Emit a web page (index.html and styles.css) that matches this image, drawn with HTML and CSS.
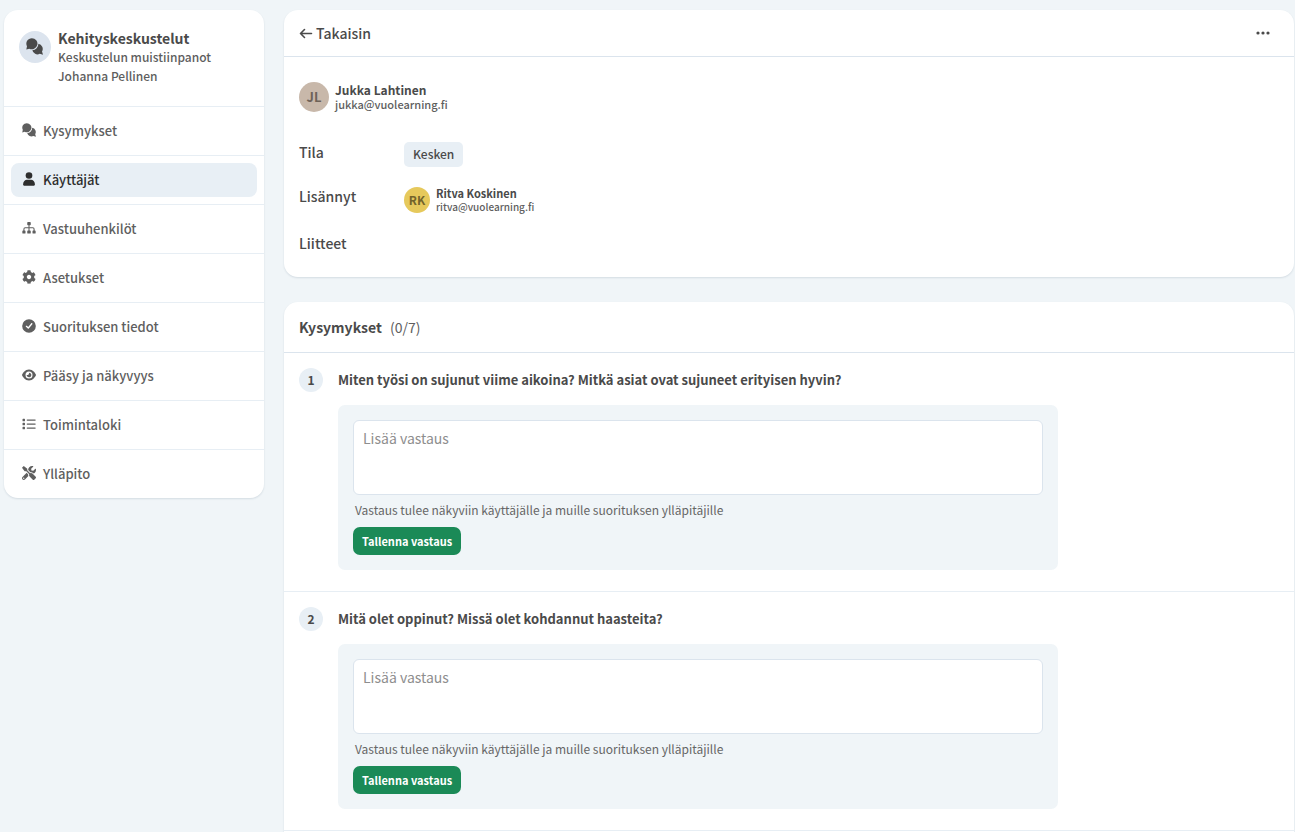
FILE: index.html
```html
<!DOCTYPE html>
<html lang="fi">
<head>
<meta charset="utf-8">
<meta name="viewport" content="width=device-width, initial-scale=1">
<title>Kehityskeskustelut</title>
<link rel="stylesheet" href="styles.css">
</head>
<body>
<svg class="sprite" aria-hidden="true">
  <symbol id="comments" viewBox="0 0 52 51"><path d="M18 0A17 17 0 1 1 10 32L1 35L3 25A17 17 0 0 1 18 0z"/><path d="M38 17.200A16 16 0 0 1 49 41L52 51L42 48A16 16 0 0 1 19.400 37A20 20 0 0 0 38 17.200z"/></symbol>
  <symbol id="user" viewBox="0 0 40 40"><circle cx="20" cy="10" r="9.500"/><path d="M3 36C3 27 9 22 14 22H26C31 22 37 27 37 36Q37 39 34 39H6Q3 39 3 36z"/></symbol>
  <symbol id="sitemap" viewBox="0 0 40 40"><path d="M17 3h6q2 0 2 2v5q0 2-2 2h-1.500v6H31q5 0 5 5v4h1q2 0 2 2v5q0 2-2 2h-5q-2 0-2-2v-5q0-2 2-2h1v-4q0-2-2-2h-9.500v6H23q2 0 2 2v5q0 2-2 2h-6q-2 0-2-2v-5q0-2 2-2h1.500v-6H9q-2 0-2 2v4h1q2 0 2 2v5q0 2-2 2H3q-2 0-2-2v-5q0-2 2-2h1v-4q0-5 5-5h9.500v-6H17q-2 0-2-2V5q0-2 2-2z"/></symbol>
  <symbol id="cog" viewBox="0 0 512 512"><path d="M487.400 315.700l-42.600-24.600c4.300-23.200 4.300-47 0-70.200l42.600-24.600c4.900-2.800 7.100-8.600 5.500-14-11.100-35.600-30-67.800-54.700-94.600-3.800-4.100-10-5.100-14.800-2.300L380.800 110c-17.900-15.400-38.500-27.300-60.800-35.100V25.800c0-5.600-3.900-10.500-9.400-11.700-36.700-8.200-74.300-7.800-109.200 0-5.500 1.200-9.400 6.100-9.400 11.700V75c-22.200 7.900-42.800 19.800-60.800 35.100L88.700 85.500c-4.900-2.800-11-1.900-14.800 2.300-24.700 26.700-43.600 58.900-54.700 94.600-1.700 5.400.6 11.200 5.500 14L67.300 221c-4.300 23.200-4.300 47 0 70.200l-42.600 24.600c-4.900 2.800-7.100 8.600-5.500 14 11.100 35.600 30 67.800 54.700 94.600 3.800 4.100 10 5.100 14.800 2.300l42.600-24.600c17.900 15.400 38.500 27.300 60.800 35.100v49.200c0 5.600 3.900 10.500 9.400 11.700 36.700 8.200 74.300 7.800 109.200 0 5.500-1.200 9.400-6.100 9.400-11.700v-49.200c22.200-7.900 42.800-19.800 60.800-35.100l42.600 24.600c4.900 2.800 11 1.900 14.800-2.300 24.700-26.700 43.600-58.900 54.700-94.600 1.500-5.500-.7-11.300-5.600-14.100zM256 336c-44.100 0-80-35.900-80-80s35.900-80 80-80 80 35.900 80 80-35.900 80-80 80z"/></symbol>
  <symbol id="check" viewBox="0 0 512 512"><path d="M256 506A250 250 0 1 0 256 6a250 250 0 1 0 0 500zM377 190L248 348c-9.400 11-24.600 11-35 2l-70-66c-10-9.400-10-24.600 0-34s24.600-9.400 34 0l50 46L339 158c9-11 25-12 35-3s12 25 3 35z"/></symbol>
  <symbol id="eye" viewBox="0 0 576 512"><path d="M288 32c-80.800 0-145.500 36.800-192.600 80.600C48.600 156 17.300 208 2.500 243.700c-3.300 7.900-3.300 16.700 0 24.600C17.300 304 48.600 356 95.400 399.400C142.500 443.200 207.200 480 288 480s145.500-36.800 192.600-80.600c46.800-43.500 78.100-95.400 93-131.100c3.300-7.900 3.300-16.700 0-24.600c-14.900-35.700-46.200-87.700-93-131.100C433.500 68.800 368.800 32 288 32zM144 256a144 144 0 1 1 288 0 144 144 0 1 1 -288 0zm144-64c0 35.300-28.700 64-64 64c-7.100 0-13.900-1.200-20.300-3.300c-5.500-1.800-11.900 1.600-11.700 7.400c.3 6.900 1.300 13.800 3.200 20.700c13.700 51.200 66.400 81.600 117.600 67.900s81.600-66.400 67.900-117.600c-11.100-41.500-47.800-69.400-88.600-71.100c-5.800-.2-9.200 6.100-7.400 11.700c2.100 6.400 3.300 13.200 3.300 20.300z"/></symbol>
  <symbol id="list" viewBox="0 0 40 40"><path d="M3 5h4q1.500 0 1.500 1.500v4Q8.500 12 7 12H3q-1.500 0-1.500-1.500v-4Q1.500 5 3 5zM3 16.500h4q1.500 0 1.500 1.500v4q0 1.500-1.500 1.500H3Q1.500 23.500 1.500 22v-4q0-1.500 1.500-1.500zM3 28h4q1.500 0 1.500 1.500v4Q8.500 35 7 35H3q-1.500 0-1.500-1.500v-4Q1.500 28 3 28zM15 7h22.500a1.500 1.500 0 0 1 0 3.500H15A1.500 1.500 0 0 1 15 7zM15 18.500h22.500a1.500 1.500 0 0 1 0 3.500H15a1.500 1.500 0 0 1 0-3.500zM15 30h22.500a1.500 1.500 0 0 1 0 3.500H15A1.500 1.500 0 0 1 15 30z"/></symbol>
  <symbol id="tools" viewBox="0 0 512 512"><path d="M501.100 395.700L384 278.600c-23.100-23.100-57.600-27.600-85.400-13.900L192 158.100V96L64 0 0 64l96 128h62.100l106.600 106.600c-13.600 27.800-9.200 62.300 13.900 85.400l117.100 117.100c14.600 14.600 38.200 14.600 52.700 0l52.700-52.700c14.500-14.600 14.500-38.200 0-52.700zM331.700 225c28.300 0 54.900 11 74.900 31l19.400 19.400c15.800-6.900 30.800-16.500 43.800-29.500 37.100-37.100 49.700-89.300 37.900-136.700-2.200-9-13.500-12.100-20.100-5.500l-74.400 74.400-67.900-11.300L334 98.900l74.400-74.400c6.600-6.600 3.400-17.900-5.700-20.200-47.400-11.700-99.600.9-136.600 37.900-28.500 28.500-41.900 66.100-41.200 103.600l82.100 82.100c8.100-1.900 16.500-2.900 24.700-2.900zm-103.900 82l-56.700-56.700L18.700 402.800c-25 25-25 65.500 0 90.500s65.500 25 90.500 0l123.600-123.600c-7.600-19.900-9.900-41.600-5-62.700zM64 472c-13.200 0-24-10.800-24-24 0-13.300 10.700-24 24-24s24 10.700 24 24c0 13.200-10.700 24-24 24z"/></symbol>
</svg>
<div class="layout">
  <aside class="card sidebar">
    <header class="profile">
      <span class="profile-icon"><svg class="icon-large" aria-hidden="true"><use href="#comments"/></svg></span>
      <div>
        <h1 class="profile-title">Kehityskeskustelut</h1>
        <p class="profile-line">Keskustelun muistiinpanot</p>
        <p class="profile-line">Johanna Pellinen</p>
      </div>
    </header>
    <nav class="menu">
      <div class="menu-row"><a class="menu-link" href="#"><svg class="icon" aria-hidden="true"><use href="#comments"/></svg>Kysymykset</a></div>
      <div class="menu-row"><a class="menu-link active" href="#" aria-current="page"><svg class="icon" aria-hidden="true"><use href="#user"/></svg>Käyttäjät</a></div>
      <div class="menu-row"><a class="menu-link" href="#"><svg class="icon" aria-hidden="true"><use href="#sitemap"/></svg>Vastuuhenkilöt</a></div>
      <div class="menu-row"><a class="menu-link" href="#"><svg class="icon" aria-hidden="true"><use href="#cog"/></svg>Asetukset</a></div>
      <div class="menu-row"><a class="menu-link" href="#"><svg class="icon" aria-hidden="true"><use href="#check"/></svg>Suorituksen tiedot</a></div>
      <div class="menu-row"><a class="menu-link" href="#"><svg class="icon" aria-hidden="true"><use href="#eye"/></svg>Pääsy ja näkyvyys</a></div>
      <div class="menu-row"><a class="menu-link" href="#"><svg class="icon" aria-hidden="true"><use href="#list"/></svg>Toimintaloki</a></div>
      <div class="menu-row"><a class="menu-link" href="#"><svg class="icon" aria-hidden="true"><use href="#tools"/></svg>Ylläpito</a></div>
    </nav>
  </aside>
  <main class="content">
    <section class="card">
      <header class="toolbar">
        <a class="back" href="#"><svg class="arrow" viewBox="0 0 14 14" aria-hidden="true"><path d="M5.500 3.500L1.500 7.500l4 4M1.500 7.500h11"/></svg>Takaisin</a>
        <button class="more" type="button" aria-label="Lisää toimintoja"><svg class="dots" viewBox="0 0 14 4" aria-hidden="true"><circle cx="2" cy="2" r="1.600"/><circle cx="7" cy="2" r="1.600"/><circle cx="12" cy="2" r="1.600"/></svg></button>
      </header>
      <div class="details">
        <div class="person">
          <span class="avatar avatar-beige">JL</span>
          <div><p class="person-name">Jukka Lahtinen</p><p class="person-mail">jukka@vuolearning.fi</p></div>
        </div>
        <dl class="facts">
          <dt>Tila</dt><dd><span class="status">Kesken</span></dd>
          <dt>Lisännyt</dt>
          <dd class="person person-small">
            <span class="avatar avatar-yellow">RK</span>
            <div><p class="person-name">Ritva Koskinen</p><p class="person-mail">ritva@vuolearning.fi</p></div>
          </dd>
          <dt>Liitteet</dt><dd></dd>
        </dl>
      </div>
    </section>
    <section class="card questions">
      <header class="questions-head"><h2 class="questions-title">Kysymykset</h2><span class="count">(0/7)</span></header>
      <article class="question">
        <span class="number">1</span>
        <form class="question-body">
          <label class="question-text" for="a1">Miten työsi on sujunut viime aikoina? Mitkä asiat ovat sujuneet erityisen hyvin?</label>
          <div class="answer">
            <textarea class="answer-input" id="a1" placeholder="Lisää vastaus"></textarea>
            <p class="hint">Vastaus tulee näkyviin käyttäjälle ja muille suorituksen ylläpitäjille</p>
            <button class="save" type="button">Tallenna vastaus</button>
          </div>
        </form>
      </article>
      <article class="question">
        <span class="number">2</span>
        <form class="question-body">
          <label class="question-text" for="a2">Mitä olet oppinut? Missä olet kohdannut haasteita?</label>
          <div class="answer">
            <textarea class="answer-input" id="a2" placeholder="Lisää vastaus"></textarea>
            <p class="hint">Vastaus tulee näkyviin käyttäjälle ja muille suorituksen ylläpitäjille</p>
            <button class="save" type="button">Tallenna vastaus</button>
          </div>
        </form>
      </article>
    </section>
  </main>
</div>
</body>
</html>
```
FILE: styles.css
```css
* { box-sizing: border-box; }

body {
  margin: 0;
  background: #f0f5f8;
  color: #4a4a4a;
  font-family: "Noto Sans CJK SC", "Noto Sans", sans-serif;
  font-size: 14px;
  line-height: 20px;
}

h1, h2, p, dl, dd { margin: 0; }
a { color: inherit; text-decoration: none; }
button, textarea { font: inherit; }
.sprite { display: none; }

.layout {
  display: grid;
  grid-template-columns: 260px minmax(0, 1fr);
  gap: 20px;
  align-items: start;
  padding: 10px 1px 0 4px;
}

.card {
  background: #fff;
  border-radius: 14px;
  box-shadow: 0 1px 2px rgba(40, 70, 100, 0.14);
}

.profile {
  display: flex;
  gap: 7px;
  padding: 19px 15px 21px;
}

.profile-icon {
  display: flex;
  flex: none;
  align-items: center;
  justify-content: center;
  width: 32px;
  height: 32px;
  margin-top: 2px;
  border-radius: 50%;
  background: #dce4ee;
}

.icon-large { width: 17px; height: 17px; margin: 0 1px 1px 0; fill: #4a4a4a; }
.profile-title { font-size: 14px; font-weight: 700; line-height: 18px; }
.profile-line { color: #5e5e5e; font-size: 12px; font-weight: 500; line-height: 19px; }

.menu-row { padding: 7px; border-top: 1px solid #e7eef4; }

.menu-link {
  display: flex;
  align-items: flex-start;
  gap: 7px;
  padding: 7px 11px;
  border-radius: 8px;
  color: #5f5f5f;
  font-size: 13px;
  font-weight: 500;
}

.menu-link.active { background: #e8eff5; color: #2e2e2e; }
.icon { flex: none; width: 14px; height: 14px; margin-top: 2px; fill: currentColor; }

.content { display: grid; gap: 25px; }

.toolbar {
  display: flex;
  align-items: center;
  justify-content: space-between;
  padding: 13px 24px 13px 15px;
  border-bottom: 1px solid #dbe4ed;
}

.back { display: flex; align-items: center; gap: 3px; font-weight: 500; }
.arrow { width: 14px; height: 14px; fill: none; stroke: #4a4a4a; stroke-width: 1.6; stroke-linecap: round; stroke-linejoin: round; }
.more { display: flex; padding: 0; border: 0; background: none; }
.dots { width: 14px; height: 4px; fill: #4a4a4a; }

.details { padding: 25px 15px 24px; }
.person { display: flex; align-items: center; gap: 6px; }

.avatar {
  display: flex;
  flex: none;
  align-items: center;
  justify-content: center;
  width: 30px;
  height: 30px;
  border-radius: 50%;
  font-size: 13px;
  font-weight: 700;
}

.avatar-beige { background: #c8b8aa; color: #6e6258; }
.avatar-yellow { background: #e6c95c; color: #73642b; }
.person-name { font-size: 12px; font-weight: 700; line-height: 15px; }
.person-mail { color: #5e5e5e; font-size: 11px; font-weight: 500; line-height: 15px; }
.person-small .avatar { width: 26px; height: 26px; font-size: 12px; }
.person-small .person-name { font-size: 11px; line-height: 14px; }
.person-small .person-mail { font-size: 10px; line-height: 14px; }

.facts {
  display: grid;
  grid-template-columns: 105px minmax(0, 1fr);
  row-gap: 19px;
  align-items: start;
  margin-top: 30px;
  font-weight: 500;
}

.status {
  display: inline-block;
  padding: 2px 9px 3px;
  border-radius: 5px;
  background: #e8eff5;
  font-size: 12px;
}

.questions { padding-bottom: 20px; }

.questions-head {
  display: flex;
  align-items: center;
  gap: 8px;
  padding: 15px;
  border-bottom: 1px solid #dbe4ed;
}

.questions-title { font-size: 14px; font-weight: 700; line-height: 20px; }
.count { color: #5e5e5e; font-size: 14px; }

.question {
  display: flex;
  gap: 15px;
  padding: 15px 15px 21px;
  border-bottom: 1px solid #e7eef4;
}

.number {
  display: flex;
  flex: none;
  align-items: center;
  justify-content: center;
  width: 24px;
  height: 24px;
  border-radius: 50%;
  background: #e8eff5;
  font-size: 12px;
  font-weight: 700;
}

.question-body { flex: 1; min-width: 0; }
.question-text { display: block; font-size: 13px; font-weight: 700; line-height: 23px; }

.answer {
  max-width: 720px;
  margin-top: 14px;
  padding: 15px;
  border-radius: 7px;
  background: #f0f5f8;
}

.answer-input {
  display: block;
  width: 100%;
  height: 75px;
  padding: 7px 9px;
  border: 1px solid #dbe4ed;
  border-radius: 6px;
  background: #fff;
  color: #4a4a4a;
  resize: none;
}

.answer-input::placeholder { color: #8e8e8e; }
.hint { margin: 5px 2px 7px; color: #666; font-size: 12px; }

.save {
  display: block;
  padding: 4px 9px;
  border: 0;
  border-radius: 7px;
  background: #1b8a57;
  color: #fff;
  font-size: 11px;
  font-weight: 700;
}
```
